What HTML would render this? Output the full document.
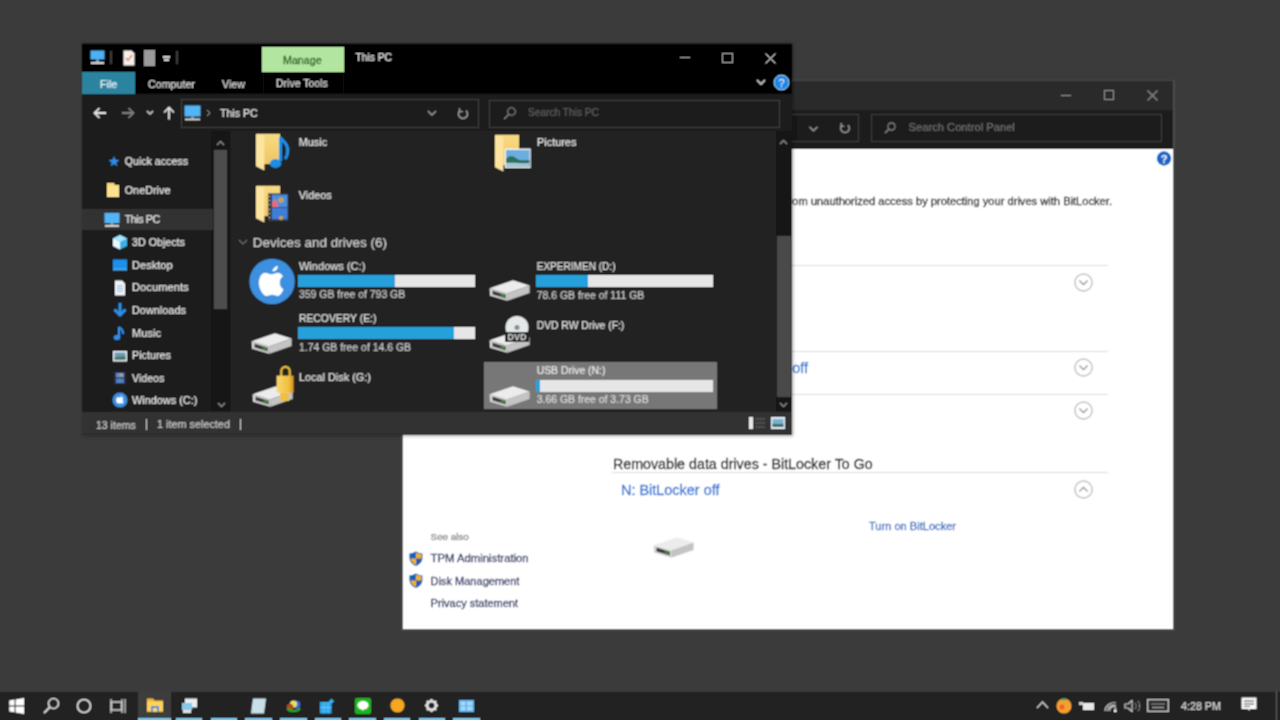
<!DOCTYPE html>
<html><head><meta charset="utf-8">
<style>
*{margin:0;padding:0;box-sizing:border-box}
html,body{width:1280px;height:720px;overflow:hidden;background:#3b3b3b;font-family:"Liberation Sans",sans-serif;position:relative}
.a{position:absolute;display:block}
.t{position:absolute;white-space:nowrap;line-height:1;-webkit-text-stroke:0.2px currentColor}
</style></head><body><svg width="0" height="0" style="position:absolute"><filter id="sb" x="0" y="0" width="100%" height="100%"><feConvolveMatrix order="3" kernelMatrix="1 2 1 2 4 2 1 2 1" divisor="16" edgeMode="duplicate"/></filter></svg><div id="root" style="position:absolute;left:0;top:0;width:1280px;height:720px;filter:url(#sb)">
<div class="a" style="left:401px;top:80px;width:774px;height:551px;background:#4b4b4b;"></div>
<div class="a" style="left:403px;top:81px;width:770px;height:29px;background:#2a2a2a;"></div>
<div class="a" style="left:402px;top:80px;width:771px;height:1px;background:#474747;"></div>
<div class="a" style="left:403px;top:110px;width:770px;height:39px;background:#1c1c1c;"></div>
<div class="a" style="left:403px;top:149px;width:770px;height:480px;background:#ffffff;"></div>
<div class="a" style="left:1061px;top:95px;width:10px;height:1px;background:#8a8a8a;"></div>
<div class="a" style="left:1104px;top:90px;width:10px;height:10px;background:transparent;border:1px solid #8a8a8a"></div>
<svg class="a" style="left:1147px;top:90px;" width="11" height="11" viewBox="0 0 11 11"><path d="M0.5 0.5L10.5 10.5M10.5 0.5L0.5 10.5" stroke="#8a8a8a" stroke-width="1.1"/></svg>
<div class="a" style="left:780px;top:114px;width:79px;height:28px;background:#1a1a1a;border:1px solid #3a3a3a"></div>
<svg class="a" style="left:809px;top:126px;" width="9" height="6" viewBox="0 0 9 6"><path d="M0.5 0.8L4.5 4.8L8.5 0.8" stroke="#9a9a9a" stroke-width="1.3" fill="none"/></svg>
<svg class="a" style="left:839px;top:122px;" width="12" height="12" viewBox="0 0 12 12"><path d="M3 3.2A4.3 4.3 0 1 0 9 3.2" stroke="#9a9a9a" stroke-width="1.4" fill="none"/><path d="M2.2 1V4.2H5.4" stroke="#9a9a9a" stroke-width="1.3" fill="none"/></svg>
<div class="a" style="left:871px;top:114px;width:291px;height:28px;background:#1a1a1a;border:1px solid #3a3a3a"></div>
<svg class="a" style="left:884px;top:122px;" width="12" height="12" viewBox="0 0 12 12"><circle cx="7.5" cy="4.5" r="3.6" stroke="#8a8a8a" stroke-width="1.1" fill="none"/><path d="M5 7L1 11" stroke="#8a8a8a" stroke-width="1.2"/></svg>
<div class="t" style="left:908.5px;top:122.48px;font-size:11.2px;color:#6e6e6e;">Search Control Panel</div>
<svg class="a" style="left:1156px;top:151px;" width="16" height="16" viewBox="0 0 16 16"><circle cx="8" cy="7.5" r="7.2" fill="#1565c8"/><text x="8" y="12" text-anchor="middle" font-family="Liberation Sans" font-weight="bold" font-size="11" fill="#fff">?</text></svg>
<div class="t" style="left:1112px;top:195.53px;font-size:11.14px;color:#1a1a1a;transform:translateX(-100%);-webkit-text-stroke:0.3px currentColor">Help protect your files and folders from unauthorized access by protecting your drives with BitLocker.</div>
<div class="a" style="left:612px;top:265px;width:496px;height:1px;background:#dcdcdc;"></div>
<div class="a" style="left:612px;top:351px;width:496px;height:1px;background:#dcdcdc;"></div>
<div class="a" style="left:612px;top:394px;width:496px;height:1px;background:#dcdcdc;"></div>
<div class="a" style="left:612px;top:472px;width:496px;height:1px;background:#dcdcdc;"></div>
<svg class="a" style="left:1073.2px;top:271.6px;" width="21" height="21" viewBox="0 0 21 21"><circle cx="10.5" cy="10.5" r="8.6" stroke="#c2c2c2" stroke-width="1.5" fill="none"/><path transform="translate(10.5 10.5)" d="M-4.2 -2L0 2.1L4.2 -2" stroke="#a6a6a6" stroke-width="1.6" fill="none"/></svg>
<svg class="a" style="left:1073.2px;top:357.1px;" width="21" height="21" viewBox="0 0 21 21"><circle cx="10.5" cy="10.5" r="8.6" stroke="#c2c2c2" stroke-width="1.5" fill="none"/><path transform="translate(10.5 10.5)" d="M-4.2 -2L0 2.1L4.2 -2" stroke="#a6a6a6" stroke-width="1.6" fill="none"/></svg>
<svg class="a" style="left:1073.2px;top:400.4px;" width="21" height="21" viewBox="0 0 21 21"><circle cx="10.5" cy="10.5" r="8.6" stroke="#c2c2c2" stroke-width="1.5" fill="none"/><path transform="translate(10.5 10.5)" d="M-4.2 -2L0 2.1L4.2 -2" stroke="#a6a6a6" stroke-width="1.6" fill="none"/></svg>
<svg class="a" style="left:1073.2px;top:478.7px;" width="21" height="21" viewBox="0 0 21 21"><circle cx="10.5" cy="10.5" r="8.6" stroke="#c2c2c2" stroke-width="1.5" fill="none"/><path transform="translate(10.5 10.5)" d="M-4.2 2L0 -2.1L4.2 2" stroke="#a6a6a6" stroke-width="1.6" fill="none"/></svg>
<div class="t" style="left:808px;top:360.72px;font-size:14.45px;color:#2f74d4;transform:translateX(-100%);-webkit-text-stroke:0.3px currentColor">D: BitLocker off</div>
<div class="t" style="left:612.9px;top:456.76px;font-size:14.28px;color:#1a1a1a;-webkit-text-stroke:0.3px currentColor">Removable data drives - BitLocker To Go</div>
<div class="t" style="left:621px;top:483.12px;font-size:14.45px;color:#2f74d4;-webkit-text-stroke:0.3px currentColor">N: BitLocker off</div>
<div class="t" style="left:869px;top:521.28px;font-size:11.08px;color:#336cc0;-webkit-text-stroke:0.3px currentColor">Turn on BitLocker</div>
<div class="t" style="left:430.6px;top:532.27px;font-size:9.8px;color:#888;-webkit-text-stroke:0.3px currentColor">See also</div>
<div class="t" style="left:430.6px;top:552.88px;font-size:11.32px;color:#2a3060;-webkit-text-stroke:0.3px currentColor">TPM Administration</div>
<div class="t" style="left:430.6px;top:575.63px;font-size:11.02px;color:#2a3060;-webkit-text-stroke:0.3px currentColor">Disk Management</div>
<div class="t" style="left:430.6px;top:598.15px;font-size:11.0px;color:#2a3060;-webkit-text-stroke:0.3px currentColor">Privacy statement</div>
<svg class="a" style="left:409px;top:551px;" width="14" height="16" viewBox="0 0 14 16"><path d="M7 0.5C4.8 1.8 2.6 2.3 0.6 2.4V7.5C0.6 11 3.5 13.5 7 15C10.5 13.5 13.4 11 13.4 7.5V2.4C11.4 2.3 9.2 1.8 7 0.5Z" fill="#1f5fb8"/><path d="M7 0.5V7.6H0.6V2.4C2.6 2.3 4.8 1.8 7 0.5Z" fill="#1f5fb8"/><path d="M7 1.6C8.8 2.6 10.6 3 12.4 3.2V7.6H7Z" fill="#f3b221"/><path d="M7 7.6H1.5C1.9 10.6 4.2 12.7 7 13.9Z" fill="#f3b221"/></svg>
<svg class="a" style="left:409px;top:573px;" width="14" height="16" viewBox="0 0 14 16"><path d="M7 0.5C4.8 1.8 2.6 2.3 0.6 2.4V7.5C0.6 11 3.5 13.5 7 15C10.5 13.5 13.4 11 13.4 7.5V2.4C11.4 2.3 9.2 1.8 7 0.5Z" fill="#1f5fb8"/><path d="M7 0.5V7.6H0.6V2.4C2.6 2.3 4.8 1.8 7 0.5Z" fill="#1f5fb8"/><path d="M7 1.6C8.8 2.6 10.6 3 12.4 3.2V7.6H7Z" fill="#f3b221"/><path d="M7 7.6H1.5C1.9 10.6 4.2 12.7 7 13.9Z" fill="#f3b221"/></svg>
<svg class="a" style="left:650px;top:534.6px;" width="46" height="24" viewBox="0 0 46 24"><g transform="scale(1.0)"><path d="M3.6 10.2L27 2.2L43.6 7.6L21 15.5Z" fill="#ececec"/><path d="M3.6 10.2L21 15.5L21.3 22.7L4 17.8Z" fill="#d6d6d6"/><path d="M21 15.5L43.6 7.6L43.6 15L21.3 22.7Z" fill="#c4c4c4"/><path d="M6.5 12.6L20 16.7V20.6L6.5 16.6Z" fill="#3a3d3a"/><path d="M14.5 15.1L20 16.7V20.6L14.5 19Z" fill="#4d7a45"/></g></svg>
<div class="a" style="left:82px;top:43px;width:710px;height:392px;background:#1b1b1b;box-shadow:1px 1px 3px rgba(0,0,0,0.35)"></div>
<div class="a" style="left:232px;top:131px;width:544px;height:282px;background:#202020;"></div>
<div class="a" style="left:231px;top:131px;width:1px;height:282px;background:#262626;"></div>
<div class="a" style="left:82px;top:43px;width:710px;height:51px;background:#000;"></div>
<div class="a" style="left:82px;top:43px;width:710px;height:1px;background:#1e1e1e;"></div>
<div class="a" style="left:82px;top:44px;width:710px;height:1px;background:#0c0c0c;"></div>
<svg class="a" style="left:90px;top:50px;" width="15" height="15" viewBox="0 0 15 15"><rect x="0.5" y="0.5" width="14" height="9" fill="#4cb0f4"/><rect x="6" y="9.5" width="3" height="2.5" fill="#7aa0c0"/><rect x="1" y="12" width="13" height="2" fill="#cfcfcf"/></svg>
<div class="a" style="left:110px;top:51px;width:2px;height:13px;background:#3a3a3a;"></div>
<svg class="a" style="left:123px;top:50px;" width="12" height="16" viewBox="0 0 12 16"><path d="M0.5 0.5H8.5L11.5 3.5V15.5H0.5Z" fill="#f4f0ea"/><path d="M3 8L5 10.5L9 5" stroke="#e08060" stroke-width="1.3" fill="none"/></svg>
<svg class="a" style="left:144px;top:50px;" width="12" height="16" viewBox="0 0 12 16"><rect x="0" y="0" width="11" height="16" fill="#9a9a9a"/></svg>
<div class="a" style="left:163px;top:56px;width:7px;height:1.5px;background:#d0d0d0;"></div>
<div class="a" style="left:164px;top:59px;width:5px;height:2px;background:#d0d0d0;"></div>
<div class="a" style="left:176px;top:51px;width:2px;height:13px;background:#3a3a3a;"></div>
<div class="a" style="left:262.3px;top:46.5px;width:81.3px;height:25.5px;background:#b2e6a0;"></div>
<div class="t" style="left:283px;top:54.90px;font-size:10.71px;color:#1f5a18;-webkit-text-stroke:0.3px currentColor">Manage</div>
<div class="t" style="left:355.6px;top:53.33px;font-size:10.2px;color:#e6e6e6;">This PC</div>
<div class="a" style="left:680px;top:57px;width:10px;height:1px;background:#9a9a9a;"></div>
<div class="a" style="left:722px;top:52.5px;width:10.5px;height:10.5px;background:transparent;border:1px solid #9a9a9a"></div>
<svg class="a" style="left:765px;top:52.5px;" width="11" height="11" viewBox="0 0 11 11"><path d="M0.5 0.5L10.5 10.5M10.5 0.5L0.5 10.5" stroke="#cfcfcf" stroke-width="1"/></svg>
<div class="a" style="left:82px;top:72px;width:53px;height:22px;background:#2a84a0;"></div>
<div class="t" style="left:100px;top:78.91px;font-size:10.7px;color:#e8f4f8;">File</div>
<div class="t" style="left:148px;top:78.91px;font-size:10.7px;color:#dcdcdc;">Computer</div>
<div class="t" style="left:222px;top:78.91px;font-size:10.7px;color:#dcdcdc;">View</div>
<div class="a" style="left:263px;top:72px;width:1px;height:21px;background:#121212;"></div>
<div class="a" style="left:343px;top:72px;width:1px;height:21px;background:#121212;"></div>
<div class="t" style="left:276px;top:79.08px;font-size:10.49px;color:#dcdcdc;">Drive Tools</div>
<svg class="a" style="left:756px;top:79px;" width="10" height="7" viewBox="0 0 10 7"><path d="M1 1L5 5L9 1" stroke="#cfcfcf" stroke-width="1.6" fill="none"/></svg>
<svg class="a" style="left:773px;top:74px;" width="17" height="17" viewBox="0 0 17 17"><circle cx="8.5" cy="8.5" r="7.4" fill="#1d86e3" stroke="#9cd0ff" stroke-width="1"/><text x="8.5" y="12.6" text-anchor="middle" font-family="Liberation Sans" font-size="11" fill="#e8f4ff">?</text></svg>
<div class="a" style="left:82px;top:94px;width:710px;height:37px;background:#1c1c1c;"></div>
<svg class="a" style="left:93px;top:107px;" width="14" height="12" viewBox="0 0 14 12"><path d="M13 6H2M6.5 1.2L1.5 6L6.5 10.8" stroke="#e0e0e0" stroke-width="1.8" fill="none"/></svg>
<svg class="a" style="left:121px;top:107px;" width="14" height="12" viewBox="0 0 14 12"><path d="M1 6H12M7.5 1.2L12.5 6L7.5 10.8" stroke="#7a7a7a" stroke-width="1.8" fill="none"/></svg>
<svg class="a" style="left:146px;top:110px;" width="8" height="6" viewBox="0 0 8 6"><path d="M1 1L4 4L7 1" stroke="#cfcfcf" stroke-width="1.5" fill="none"/></svg>
<svg class="a" style="left:163px;top:106px;" width="12" height="14" viewBox="0 0 12 14"><path d="M6 13.5V2M1.2 6.5L6 1.5L10.8 6.5" stroke="#e0e0e0" stroke-width="1.8" fill="none"/></svg>
<div class="a" style="left:181px;top:99px;width:298px;height:29px;background:#1a1a1a;border:1px solid #3c3c3c"></div>
<svg class="a" style="left:184px;top:105px;" width="17" height="16" viewBox="0 0 17 16"><rect x="0.5" y="0.5" width="16" height="11" fill="#52b4f6"/><rect x="7" y="11.5" width="3" height="2" fill="#7aa0c0"/><rect x="1" y="13.5" width="15" height="1.8" fill="#dadada"/></svg>
<svg class="a" style="left:206px;top:109px;" width="5" height="8" viewBox="0 0 5 8"><path d="M1 1L4 4L1 7" stroke="#888" stroke-width="1" fill="none"/></svg>
<div class="t" style="left:220px;top:108.49px;font-size:10.6px;color:#e4e4e4;">This PC</div>
<svg class="a" style="left:427px;top:110px;" width="10" height="7" viewBox="0 0 10 7"><path d="M1 1L5 5L9 1" stroke="#9a9a9a" stroke-width="1.4" fill="none"/></svg>
<svg class="a" style="left:457px;top:107px;" width="12" height="13" viewBox="0 0 12 13"><path d="M3 3.6A4.5 4.5 0 1 0 9 3.6" stroke="#9a9a9a" stroke-width="1.5" fill="none"/><path d="M2.5 1.2V4.6H5.8" stroke="#9a9a9a" stroke-width="1.4" fill="none"/></svg>
<div class="a" style="left:489px;top:100px;width:291px;height:28px;background:#1a1a1a;border:1px solid #3c3c3c"></div>
<svg class="a" style="left:503px;top:107px;" width="13" height="13" viewBox="0 0 13 13"><circle cx="8.5" cy="4.5" r="3.8" stroke="#8a8a8a" stroke-width="1.1" fill="none"/><path d="M6 7.2L1.2 12" stroke="#8a8a8a" stroke-width="1.2"/></svg>
<div class="t" style="left:528px;top:108.36px;font-size:10.17px;color:#5e5e5e;">Search This PC</div>
<div class="a" style="left:211px;top:131px;width:20px;height:282px;background:#171717;"></div>
<div class="a" style="left:214px;top:150px;width:13px;height:159px;background:#4d4d4d;"></div>
<svg class="a" style="left:216px;top:140px;" width="9" height="6" viewBox="0 0 9 6"><path d="M1 5L4.5 1.5L8 5" stroke="#8a8a8a" stroke-width="1.3" fill="none"/></svg>
<svg class="a" style="left:217px;top:402px;" width="9" height="6" viewBox="0 0 9 6"><path d="M1 1L4.5 4.5L8 1" stroke="#8a8a8a" stroke-width="1.3" fill="none"/></svg>
<div class="a" style="left:82px;top:209px;width:131px;height:21px;background:#333333;"></div>
<svg class="a" style="left:108px;top:153px;" width="16" height="16" viewBox="0 0 16 16"><path d="M6 3L7.4 6.8L11.4 6.9L8.3 9.4L9.4 13.3L6 11L2.6 13.3L3.7 9.4L0.6 6.9L4.6 6.8Z" fill="#2f8fe8"/></svg>
<div class="t" style="left:124.7px;top:155.65px;font-size:10.65px;color:#e8e8e8;">Quick access</div>
<svg class="a" style="left:105px;top:182px;" width="16" height="16" viewBox="0 0 16 16"><path d="M2 1H9L10 3H14V15H2Z" fill="#f6d77a"/><path d="M2 4H14V15H2Z" fill="#ffe28e"/></svg>
<div class="t" style="left:124.7px;top:185.09px;font-size:10.84px;color:#e8e8e8;">OneDrive</div>
<svg class="a" style="left:104px;top:212px;" width="16" height="16" viewBox="0 0 16 16"><rect x="0.5" y="1" width="15" height="10" fill="#52b4f6"/><rect x="6.5" y="11" width="3" height="2" fill="#7aa0c0"/><rect x="1" y="13" width="14" height="1.8" fill="#dadada"/></svg>
<div class="t" style="left:124.7px;top:214.41px;font-size:10.7px;color:#e8e8e8;letter-spacing:-0.4px">This PC</div>
<svg class="a" style="left:112px;top:234px;" width="16" height="16" viewBox="0 0 16 16"><path d="M8 1L15 4.5V12L8 15.5L1 12V4.5Z" fill="#3ab0e8"/><path d="M8 1L15 4.5L8 8L1 4.5Z" fill="#a8e6fa"/><path d="M8 8V15.5L1 12V4.5Z" fill="#e8f8ff"/></svg>
<div class="t" style="left:132px;top:237.30px;font-size:10.71px;color:#e8e8e8;">3D Objects</div>
<svg class="a" style="left:112px;top:257px;" width="16" height="16" viewBox="0 0 16 16"><rect x="1" y="2.5" width="14" height="10" fill="#1e8fe8"/><rect x="1" y="11.5" width="14" height="2" fill="#4aa8f0"/></svg>
<div class="t" style="left:132px;top:259.89px;font-size:11.07px;color:#e8e8e8;">Desktop</div>
<svg class="a" style="left:112px;top:280px;" width="16" height="16" viewBox="0 0 16 16"><path d="M3 0.5H10L13 3.5V15.5H3Z" fill="#f0f4f8"/><path d="M5 6H11M5 8.5H11M5 11H11" stroke="#7ab0dc" stroke-width="1"/></svg>
<div class="t" style="left:132px;top:282.17px;font-size:11.21px;color:#e8e8e8;">Documents</div>
<svg class="a" style="left:112px;top:302px;" width="16" height="16" viewBox="0 0 16 16"><path d="M8 1V13M2.5 7.5L8 13L13.5 7.5" stroke="#2f8fe8" stroke-width="3" fill="none"/></svg>
<div class="t" style="left:132px;top:304.63px;font-size:10.9px;color:#e8e8e8;">Downloads</div>
<svg class="a" style="left:112px;top:325px;" width="16" height="16" viewBox="0 0 16 16"><path d="M7 2V12" stroke="#2f8fe8" stroke-width="2"/><ellipse cx="5" cy="12.5" rx="3.3" ry="2.5" fill="#2f8fe8"/><path d="M7 2C9 4 12 5 11 9" stroke="#2f8fe8" stroke-width="1.8" fill="none"/></svg>
<div class="t" style="left:132px;top:327.73px;font-size:11.14px;color:#e8e8e8;">Music</div>
<svg class="a" style="left:112px;top:348px;" width="16" height="16" viewBox="0 0 16 16"><rect x="1" y="3" width="14" height="10.5" fill="#e6eaee"/><rect x="2.5" y="4.5" width="11" height="7.5" fill="#6a9ab8"/><path d="M2.5 10C5 8 9 9 13.5 8V12H2.5Z" fill="#4a7a6a"/></svg>
<div class="t" style="left:132px;top:350.22px;font-size:10.8px;color:#e8e8e8;">Pictures</div>
<svg class="a" style="left:112px;top:370px;" width="16" height="16" viewBox="0 0 16 16"><rect x="2" y="1.5" width="12" height="13" fill="#2a2a3a"/><rect x="4" y="3" width="8" height="4.5" fill="#5a8ad0"/><rect x="4" y="8.5" width="8" height="4.5" fill="#4a78d8"/><circle cx="9" cy="5" r="1.6" fill="#d0a030"/><circle cx="8" cy="10.5" r="1.3" fill="#60a040"/></svg>
<div class="t" style="left:132px;top:372.66px;font-size:10.63px;color:#e8e8e8;">Videos</div>
<svg class="a" style="left:112px;top:392px;" width="16" height="16" viewBox="0 0 16 16"><circle cx="8" cy="8" r="7.5" fill="#3b8fe0"/><path d="M8.2 4.6C8.7 3.6 9.5 3.2 9.9 3.2C9.9 3.9 9.3 4.7 8.2 4.6Z M5.6 5.2C6.7 5 7.4 5.5 8 5.5C8.5 5.5 9.3 4.9 10.3 5.2C10.9 5.4 11.3 5.8 11.6 6.1C10.7 6.6 10.5 7.5 10.6 8.2C10.7 8.9 11.2 9.4 11.7 9.6C11.4 10.5 10.7 11.6 10 11.6C9.4 11.6 9.1 11.2 8.2 11.2C7.3 11.2 7.1 11.6 6.4 11.6C5.6 11.6 3.8 9.5 4.2 7.4C4.4 6.2 5 5.4 5.6 5.2Z" fill="#fff"/></svg>
<div class="t" style="left:132px;top:394.63px;font-size:10.9px;color:#e8e8e8;">Windows (C:)</div>
<div class="a" style="left:776px;top:131px;width:16px;height:282px;background:#171717;"></div>
<div class="a" style="left:777px;top:236px;width:14px;height:161px;background:#4a4a4a;"></div>
<svg class="a" style="left:779px;top:139px;" width="9" height="6" viewBox="0 0 9 6"><path d="M1 5L4.5 1.5L8 5" stroke="#8a8a8a" stroke-width="1.3" fill="none"/></svg>
<svg class="a" style="left:779px;top:402px;" width="9" height="6" viewBox="0 0 9 6"><path d="M1 1L4.5 4.5L8 1" stroke="#8a8a8a" stroke-width="1.3" fill="none"/></svg>
<svg class="a" style="left:256px;top:133px;" width="36" height="38" viewBox="0 0 36 38"><defs><linearGradient id="fb" x1="0" y1="0" x2="0" y2="1"><stop offset="0" stop-color="#f8da84"/><stop offset="1" stop-color="#efc561"/></linearGradient></defs><path d="M0.3 0.8H24V31H0.3Z" fill="url(#fb)"/><path d="M0 1.2L8.4 2.4V37.5 L0 33.2Z" fill="#fde4a0"/><path d="M24.5 4V28" stroke="#1e8ee8" stroke-width="3"/><ellipse cx="19.5" cy="30.5" rx="5.8" ry="4.4" fill="#1e8ee8"/><path d="M24.5 5C28 9 33 12 31.5 20C31 23 30 25 29 26" stroke="#1e8ee8" stroke-width="3" fill="none"/></svg>
<div class="t" style="left:298.7px;top:136.74px;font-size:10.9px;color:#e6e6e6;">Music</div>
<svg class="a" style="left:256px;top:185px;" width="36" height="38" viewBox="0 0 36 38"><defs><linearGradient id="fb" x1="0" y1="0" x2="0" y2="1"><stop offset="0" stop-color="#f8da84"/><stop offset="1" stop-color="#efc561"/></linearGradient></defs><path d="M0.3 0.8H24V31H0.3Z" fill="url(#fb)"/><path d="M0 1.2L8.4 2.4V37.5 L0 33.2Z" fill="#fde4a0"/><rect x="12" y="8.4" width="20" height="27.5" fill="#3a3a48"/><rect x="16" y="9.7" width="15.5" height="12.5" fill="#4a8ee0"/><rect x="16" y="23" width="15.5" height="11.2" fill="#3e7ed8"/><circle cx="25" cy="15" r="2.6" fill="#d8a030"/><path d="M16 17C19 13 21 15 22 19V22H16Z" fill="#e07080"/><circle cx="25" cy="33" r="2" fill="#d8a030"/><path d="M13.5 11V12M13.5 15V16M13.5 19V20M13.5 24V25M13.5 28V29M13.5 32V33" stroke="#ccc" stroke-width="1"/></svg>
<div class="t" style="left:298.7px;top:190.24px;font-size:10.9px;color:#e6e6e6;">Videos</div>
<svg class="a" style="left:494.6px;top:134px;" width="36" height="38" viewBox="0 0 36 38"><defs><linearGradient id="fb" x1="0" y1="0" x2="0" y2="1"><stop offset="0" stop-color="#f8da84"/><stop offset="1" stop-color="#efc561"/></linearGradient></defs><path d="M0.3 0.8H24V31H0.3Z" fill="url(#fb)"/><path d="M0 1.2L8.4 2.4V37.5 L0 33.2Z" fill="#fde4a0"/><rect x="9.7" y="14.5" width="26" height="19.5" fill="#eef2f6"/><rect x="11" y="16" width="23.5" height="16.5" fill="#6aaee0"/><path d="M11 25C15 20 19 22 22 25C26 27 30 26 34.5 26V32.5H11Z" fill="#2f6e5c"/><path d="M11 29C18 28 26 30 34.5 29V32.5H11Z" fill="#a8c8d8"/></svg>
<div class="t" style="left:537px;top:136.74px;font-size:10.9px;color:#e6e6e6;">Pictures</div>
<svg class="a" style="left:238px;top:239px;" width="10" height="7" viewBox="0 0 10 7"><path d="M1 1L5 5L9 1" stroke="#6a6a6a" stroke-width="1.2" fill="none"/></svg>
<div class="t" style="left:252.8px;top:236.33px;font-size:13.49px;color:#cfcfcf;">Devices and drives (6)</div>
<div class="a" style="left:484px;top:362px;width:233px;height:47px;background:#777777;"></div>
<div class="t" style="left:298.9px;top:260.58px;font-size:11.08px;color:#e0e0e0;">Windows (C:)</div>
<div class="a" style="left:298px;top:274.5px;width:177px;height:12px;background:#e6e6e6;"></div>
<div class="a" style="left:298px;top:274.5px;width:96.5px;height:12px;background:#26a0da;"></div>
<div class="t" style="left:299px;top:290.12px;font-size:10.45px;color:#c8c8c8;">359 GB free of 793 GB</div>
<svg class="a" style="left:249px;top:258px;" width="46" height="46" viewBox="0 0 46 46"><circle cx="23.1" cy="23.5" r="22.7" fill="#3d8fdf"/><g transform="matrix(1.14 0 0 1.272 -3.685 -6.528)"><path d="M23.5 15.5C25 12.5 27.5 11.5 28.5 11.5C28.6 13.5 27 16 23.5 15.5Z" fill="#fff"/><path d="M16.5 17C19.5 16.5 21.5 18 23 18C24.5 18 26.5 16.3 29.5 17C31 17.4 32.3 18.5 33 19.5C30.5 21 30 23.5 30.3 25.5C30.6 27.5 32 29 33.5 29.5C32.5 32 30.5 35 28.5 35C27 35 26 34 23.5 34C21 34 20.5 35 18.5 35C16 35 11 29 12 23C12.6 19.5 14.5 17.4 16.5 17Z" fill="#fff"/></g></svg>
<div class="t" style="left:298.9px;top:313.66px;font-size:10.4px;color:#e0e0e0;">RECOVERY (E:)</div>
<div class="a" style="left:298px;top:327.2px;width:177px;height:12px;background:#e6e6e6;"></div>
<div class="a" style="left:298px;top:327.2px;width:155.60000000000002px;height:12px;background:#26a0da;"></div>
<div class="t" style="left:299px;top:343.12px;font-size:10.45px;color:#c8c8c8;">1.74 GB free of 14.6 GB</div>
<svg class="a" style="left:248px;top:330.6px;" width="46" height="24" viewBox="0 0 46 24"><g transform="scale(1.0)"><path d="M3.6 10.2L27 2.2L43.6 7.6L21 15.5Z" fill="#ececec"/><path d="M3.6 10.2L21 15.5L21.3 22.7L4 17.8Z" fill="#d6d6d6"/><path d="M21 15.5L43.6 7.6L43.6 15L21.3 22.7Z" fill="#c4c4c4"/><path d="M6.5 12.6L20 16.7V20.6L6.5 16.6Z" fill="#3a3d3a"/><path d="M14.5 15.1L20 16.7V20.6L14.5 19Z" fill="#4d7a45"/></g></svg>
<div class="t" style="left:298.9px;top:372.24px;font-size:10.9px;color:#e0e0e0;">Local Disk (G:)</div>
<svg class="a" style="left:248.6px;top:383.7px;" width="46" height="24" viewBox="0 0 46 24"><g transform="scale(1.0)"><path d="M3.6 10.2L27 2.2L43.6 7.6L21 15.5Z" fill="#ececec"/><path d="M3.6 10.2L21 15.5L21.3 22.7L4 17.8Z" fill="#d6d6d6"/><path d="M21 15.5L43.6 7.6L43.6 15L21.3 22.7Z" fill="#c4c4c4"/><path d="M6.5 12.6L20 16.7V20.6L6.5 16.6Z" fill="#3a3d3a"/><path d="M14.5 15.1L20 16.7V20.6L14.5 19Z" fill="#4d7a45"/></g></svg>
<svg class="a" style="left:275px;top:363px;" width="20" height="40" viewBox="0 0 20 40"><defs><linearGradient id="lk" x1="0" y1="0" x2="1" y2="0"><stop offset="0" stop-color="#f8d870"/><stop offset="0.7" stop-color="#f0c040"/><stop offset="1" stop-color="#d89020"/></linearGradient></defs><path d="M6.3 13V8A4.2 4.2 0 0 1 14.7 8V13" stroke="#e8bc38" stroke-width="2.2" fill="none"/><rect x="1.6" y="12.6" width="17" height="17" fill="url(#lk)"/><rect x="5" y="29.6" width="9" height="8.4" fill="#eec040"/></svg>
<div class="t" style="left:536.7px;top:261.94px;font-size:10.07px;color:#e0e0e0;">EXPERIMEN (D:)</div>
<div class="a" style="left:536px;top:274.5px;width:177px;height:12px;background:#e6e6e6;"></div>
<div class="a" style="left:536px;top:274.5px;width:52px;height:12px;background:#26a0da;"></div>
<div class="t" style="left:536.7px;top:290.62px;font-size:10.45px;color:#c8c8c8;">78.6 GB free of 111 GB</div>
<svg class="a" style="left:486px;top:278px;" width="46" height="24" viewBox="0 0 46 24"><g transform="scale(1.0)"><path d="M3.6 10.2L27 2.2L43.6 7.6L21 15.5Z" fill="#ececec"/><path d="M3.6 10.2L21 15.5L21.3 22.7L4 17.8Z" fill="#d6d6d6"/><path d="M21 15.5L43.6 7.6L43.6 15L21.3 22.7Z" fill="#c4c4c4"/><path d="M6.5 12.6L20 16.7V20.6L6.5 16.6Z" fill="#3a3d3a"/><path d="M14.5 15.1L20 16.7V20.6L14.5 19Z" fill="#4d7a45"/></g></svg>
<div class="t" style="left:536.7px;top:320.71px;font-size:10.34px;color:#e0e0e0;">DVD RW Drive (F:)</div>
<svg class="a" style="left:486px;top:330px;" width="46" height="24" viewBox="0 0 46 24"><g transform="scale(1.0)"><path d="M3.6 10.2L27 2.2L43.6 7.6L21 15.5Z" fill="#ececec"/><path d="M3.6 10.2L21 15.5L21.3 22.7L4 17.8Z" fill="#d6d6d6"/><path d="M21 15.5L43.6 7.6L43.6 15L21.3 22.7Z" fill="#c4c4c4"/><path d="M6.5 12.6L20 16.7V20.6L6.5 16.6Z" fill="#3a3d3a"/><path d="M14.5 15.1L20 16.7V20.6L14.5 19Z" fill="#4d7a45"/></g></svg>
<svg class="a" style="left:504px;top:316px;" width="26" height="27" viewBox="0 0 26 27"><circle cx="13" cy="11.5" r="11.5" fill="#e4e8e8"/><circle cx="13" cy="11.5" r="2.5" fill="#8a8a8a"/><rect x="1" y="16" width="24" height="10" fill="#222"/><text x="13" y="24.3" text-anchor="middle" font-family="Liberation Sans" font-weight="bold" font-size="9" fill="#d8d8d8">DVD</text></svg>
<div class="t" style="left:536.7px;top:366.16px;font-size:10.4px;color:#e8e8e8;">USB Drive (N:)</div>
<div class="a" style="left:536px;top:379.6px;width:177px;height:12.4px;background:#e6e6e6;"></div>
<div class="a" style="left:536px;top:379.6px;width:4px;height:12.4px;background:#26a0da;"></div>
<div class="t" style="left:536.7px;top:395.12px;font-size:10.45px;color:#dadada;">3.66 GB free of 3.73 GB</div>
<svg class="a" style="left:486px;top:383.5px;" width="46" height="24" viewBox="0 0 46 24"><g transform="scale(1.0)"><path d="M3.6 10.2L27 2.2L43.6 7.6L21 15.5Z" fill="#ececec"/><path d="M3.6 10.2L21 15.5L21.3 22.7L4 17.8Z" fill="#d6d6d6"/><path d="M21 15.5L43.6 7.6L43.6 15L21.3 22.7Z" fill="#c4c4c4"/><path d="M6.5 12.6L20 16.7V20.6L6.5 16.6Z" fill="#3a3d3a"/><path d="M14.5 15.1L20 16.7V20.6L14.5 19Z" fill="#4d7a45"/></g></svg>
<div class="a" style="left:82px;top:412px;width:710px;height:21px;background:#323232;"></div>
<div class="a" style="left:82px;top:432.5px;width:710px;height:2.5px;background:#2b2b2b;"></div>
<div class="t" style="left:96px;top:419.55px;font-size:10.53px;color:#c8c8c8;">13 items</div>
<div class="a" style="left:146px;top:419px;width:1px;height:11px;background:#c8c8c8;"></div>
<div class="t" style="left:157px;top:419.28px;font-size:10.85px;color:#c8c8c8;">1 item selected</div>
<div class="a" style="left:240px;top:419px;width:1px;height:11px;background:#c8c8c8;"></div>
<svg class="a" style="left:749px;top:417px;" width="17" height="13" viewBox="0 0 17 13"><rect x="0" y="0" width="4" height="12" fill="#e8e8e8"/><path d="M6 2H16M6 6H16M6 10H16" stroke="#6a6a6a" stroke-width="1"/></svg>
<svg class="a" style="left:771px;top:417px;" width="14" height="13" viewBox="0 0 14 13"><rect x="0" y="0" width="14" height="12" fill="#dfe8f0"/><rect x="1.5" y="2" width="11" height="8" fill="#7ab0d0"/><path d="M1.5 7C5 6 9 8 12.5 6.5V10H1.5Z" fill="#3a7068"/></svg>
<div class="a" style="left:0px;top:691.5px;width:1280px;height:28.5px;background:#232323;"></div>
<svg class="a" style="left:9px;top:698px;" width="15" height="16" viewBox="0 0 15 16"><path d="M0.3 2.4L5.6 1.6V7.4H0.3Z M6.6 1.4L15 0V7.4H6.6Z M0.3 8.4H5.6V14.3L0.3 13.6Z M6.6 8.4H15V16L6.6 14.5Z" fill="#fff"/></svg>
<svg class="a" style="left:42px;top:697px;" width="18" height="18" viewBox="0 0 18 18"><circle cx="11.5" cy="6.5" r="5" stroke="#d8d8d8" stroke-width="1.6" fill="none"/><path d="M8 10L2 16" stroke="#d8d8d8" stroke-width="1.8"/></svg>
<svg class="a" style="left:76px;top:698px;" width="16" height="16" viewBox="0 0 16 16"><circle cx="8" cy="8" r="6.5" stroke="#e0e0e0" stroke-width="1.7" fill="none"/></svg>
<svg class="a" style="left:110px;top:698px;" width="17" height="16" viewBox="0 0 17 16"><rect x="1.5" y="4" width="10" height="8" stroke="#d0d0d0" stroke-width="1.5" fill="none"/><path d="M1 1V15M12 1V15M15 1V15" stroke="#d0d0d0" stroke-width="1.3"/></svg>
<div class="a" style="left:138px;top:691px;width:33px;height:27px;background:#3c3c3c;"></div>
<div class="a" style="left:138px;top:718.3px;width:33px;height:1.7px;background:#7ac6ef;"></div>
<div class="a" style="left:176px;top:718.3px;width:26px;height:1.7px;background:#7ac6ef;"></div>
<div class="a" style="left:211px;top:718.3px;width:26px;height:1.7px;background:#7ac6ef;"></div>
<div class="a" style="left:245px;top:718.3px;width:27px;height:1.7px;background:#7ac6ef;"></div>
<div class="a" style="left:280px;top:718.3px;width:27px;height:1.7px;background:#7ac6ef;"></div>
<div class="a" style="left:315px;top:718.3px;width:26px;height:1.7px;background:#7ac6ef;"></div>
<div class="a" style="left:349px;top:718.3px;width:27px;height:1.7px;background:#7ac6ef;"></div>
<div class="a" style="left:384px;top:718.3px;width:26px;height:1.7px;background:#7ac6ef;"></div>
<div class="a" style="left:419px;top:718.3px;width:26px;height:1.7px;background:#7ac6ef;"></div>
<div class="a" style="left:453px;top:718.3px;width:27px;height:1.7px;background:#7ac6ef;"></div>
<svg class="a" style="left:147px;top:698.4px;" width="16" height="14" viewBox="0 0 16 14"><path d="M0 0.5H6L7.5 2.5H16V13.6H0Z" fill="#f0b838"/><path d="M0 3.5H16V13.6H0Z" fill="#ffd35a"/><path d="M4 13.6V8H12V13.6H10V10H6V13.6Z" fill="#3a8ee0"/><rect x="6" y="10" width="4" height="3.6" fill="#f8d858"/></svg>
<svg class="a" style="left:181px;top:698px;" width="17" height="16" viewBox="0 0 17 16"><rect x="4" y="0.5" width="12" height="9" fill="#e8eef2"/><rect x="1" y="5" width="10" height="7" fill="#8ac8e8"/><rect x="2" y="12" width="8" height="3" fill="#e0e0e0"/></svg>
<svg class="a" style="left:251px;top:698px;" width="15" height="16" viewBox="0 0 15 16"><path d="M2 0.5H15L13 15.5H0Z" fill="#c8dfe8"/></svg>
<svg class="a" style="left:285.5px;top:698.5px;" width="15" height="13.5" viewBox="0 0 15 13.5"><circle cx="10.5" cy="5.5" r="3.8" fill="#3a68d0"/><circle cx="7.5" cy="5" r="3.5" fill="#e8e070"/><circle cx="4" cy="8" r="3.3" fill="#b04818"/><path d="M1.5 9.5C4 13 10 13 14 9.5" stroke="#28a028" stroke-width="2.6" fill="none"/></svg>
<svg class="a" style="left:320px;top:699px;" width="14" height="15" viewBox="0 0 14 15"><rect x="0" y="3" width="11.5" height="11.5" fill="#28a8ec"/><path d="M11.5 0V4.5M9.2 2.2H13.8" stroke="#40c0f8" stroke-width="1.4"/><path d="M0 8.5H11.5M4 3V14.5M8 3V14.5" stroke="#70ccff" stroke-width="0.8"/></svg>
<svg class="a" style="left:355px;top:698px;" width="16" height="16" viewBox="0 0 16 16"><rect x="0" y="0" width="16" height="16" rx="2" fill="#1fb51f"/><ellipse cx="8" cy="7.2" rx="5.5" ry="4.2" fill="#fff"/><path d="M6 10L8 13L9 10Z" fill="#fff"/></svg>
<svg class="a" style="left:390px;top:698px;" width="15" height="15" viewBox="0 0 15 15"><circle cx="7.5" cy="7.5" r="7" fill="#f5a623"/></svg>
<svg class="a" style="left:425px;top:699px;" width="13" height="13" viewBox="0 0 13 13"><circle cx="6.5" cy="6.5" r="4.3" stroke="#e6e6e6" stroke-width="2.6" fill="none"/><path d="M6.5 0V2.5M6.5 10.5V13M0 6.5H2.5M10.5 6.5H13M1.9 1.9L3.7 3.7M9.3 9.3L11.1 11.1M1.9 11.1L3.7 9.3M9.3 3.7L11.1 1.9" stroke="#e6e6e6" stroke-width="2"/></svg>
<svg class="a" style="left:459px;top:700px;" width="15" height="12" viewBox="0 0 15 12"><rect x="0" y="0" width="15" height="12" fill="#5ab0e8"/><rect x="1.5" y="1.5" width="5" height="4" fill="#a8d8f8"/><rect x="8" y="1.5" width="5.5" height="4" fill="#a8d8f8"/><rect x="1.5" y="6.5" width="5" height="4" fill="#a8d8f8"/><rect x="8" y="6.5" width="5.5" height="4" fill="#a8d8f8"/></svg>
<svg class="a" style="left:1036px;top:700px;" width="13" height="9" viewBox="0 0 13 9"><path d="M1 8L6.5 2L12 8" stroke="#d0d0d0" stroke-width="1.3" fill="none"/></svg>
<svg class="a" style="left:1056px;top:698px;" width="16" height="16" viewBox="0 0 16 16"><circle cx="8" cy="8" r="7.5" fill="#f4a030"/><circle cx="6" cy="9" r="2.5" fill="#f06020"/><path d="M6 1C7 2 9 2 10 1" stroke="#40b060" stroke-width="2"/></svg>
<svg class="a" style="left:1079px;top:701px;" width="16" height="10" viewBox="0 0 16 10"><rect x="4" y="2" width="11" height="7" fill="#e8e8e8"/><path d="M0 1H4V4H0Z" fill="#c8c8c8"/></svg>
<svg class="a" style="left:1104px;top:701px;" width="13" height="11" viewBox="0 0 13 11"><path d="M1 10A9 9 0 0 1 12 2M3.5 10A6 6 0 0 1 12 5M6 10A3 3 0 0 1 12 8" stroke="#d0d0d0" stroke-width="1.2" fill="none"/><rect x="10" y="8.5" width="2.5" height="2.5" fill="#fff"/></svg>
<svg class="a" style="left:1124px;top:700px;" width="16" height="12" viewBox="0 0 16 12"><path d="M1 4H4L8 0.5V11.5L4 8H1Z" stroke="#d0d0d0" stroke-width="1.2" fill="none"/><path d="M11 3C12.5 4.5 12.5 7.5 11 9M14 1C16 3.5 16 8.5 14 11" stroke="#9a9a9a" stroke-width="1"/></svg>
<svg class="a" style="left:1147px;top:699px;" width="22" height="13" viewBox="0 0 22 13"><rect x="0.7" y="0.7" width="20.6" height="11.6" stroke="#c0c0c0" stroke-width="1.4" fill="none"/><path d="M4 5H18M5 8.5H17" stroke="#a8a8a8" stroke-width="1.2"/></svg>
<div class="t" style="left:1181px;top:700.87px;font-size:10.74px;color:#dcdcdc;">4:28 PM</div>
<svg class="a" style="left:1241px;top:697px;" width="16" height="17" viewBox="0 0 16 17"><path d="M0.5 0.5H15.5V12H9L8 14L7 12H0.5Z" fill="#f8f8f8"/><path d="M3 4H13M3 7H13M3 9.5H9" stroke="#444" stroke-width="1"/></svg>
<div class="a" style="left:1276px;top:691px;width:1px;height:29px;background:#5a5a5a;"></div>
</div></body></html>
